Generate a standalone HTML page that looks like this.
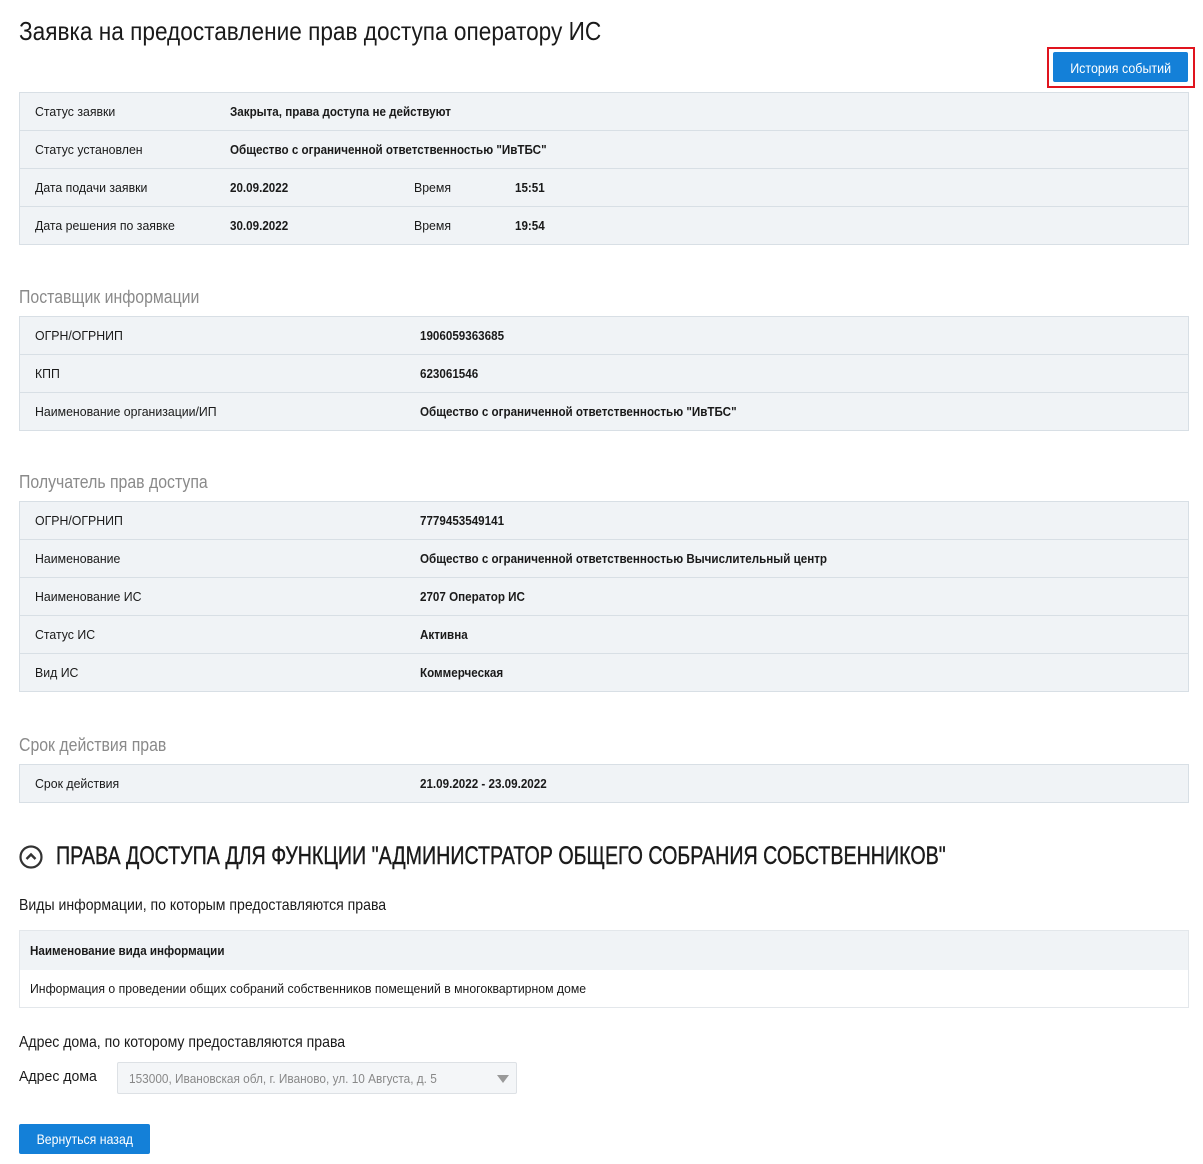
<!DOCTYPE html>
<html><head><meta charset="utf-8"><style>
body{margin:0;width:1203px;height:1164px;background:#fff;font-family:"Liberation Sans",Arial,sans-serif;color:#1a1a1a;position:relative;overflow:hidden}
.a{position:absolute;white-space:nowrap;transform:scaleX(.86);transform-origin:0 50%}
.t{position:absolute;left:19px;width:1168px;background:#f0f3f6;border:1px solid #d8dfe5}
.r{height:37px;border-top:1px solid #d8dfe5;position:relative;font-size:12.5px;line-height:39px}
.r:first-child{border-top:none}
.r span{position:absolute;white-space:nowrap;transform:scaleX(.985);transform-origin:0 50%}
.r span.b{font-weight:bold;transform:scaleX(.93)}
.h2{position:absolute;left:19px;font-size:18px;color:#8a8a8a;white-space:nowrap;transform:scaleX(.88);transform-origin:0 50%}
.h3{position:absolute;left:19px;font-size:16px;color:#1a1a1a;white-space:nowrap;transform:scaleX(.88);transform-origin:0 50%}
</style></head><body>
<div class="a" style="left:19px;top:15px;font-size:26px;line-height:32px;transform:scaleX(.87)">Заявка на предоставление прав доступа оператору ИС</div>
<div style="position:absolute;left:1047px;top:47px;width:144px;height:37px;border:2px solid #e0141e"></div>
<div style="position:absolute;left:1053px;top:52px;width:135px;height:30px;background:#1480d8;border-radius:2px;color:#fff;font-size:14px;line-height:32px;text-align:center"><span style="display:inline-block;transform:scaleX(.89)">История событий</span></div>

<div class="t" style="top:92px">
<div class="r"><span style="left:15px">Статус заявки</span><span class="b" style="left:210px">Закрыта, права доступа не действуют</span></div>
<div class="r"><span style="left:15px">Статус установлен</span><span class="b" style="left:210px">Общество с ограниченной ответственностью "ИвТБС"</span></div>
<div class="r"><span style="left:15px">Дата подачи заявки</span><span class="b" style="left:210px">20.09.2022</span><span style="left:394px">Время</span><span class="b" style="left:495px">15:51</span></div>
<div class="r"><span style="left:15px">Дата решения по заявке</span><span class="b" style="left:210px">30.09.2022</span><span style="left:394px">Время</span><span class="b" style="left:495px">19:54</span></div>
</div>

<div class="h2" style="top:287px">Поставщик информации</div>
<div class="t" style="top:316px">
<div class="r"><span style="left:15px">ОГРН/ОГРНИП</span><span class="b" style="left:400px">1906059363685</span></div>
<div class="r"><span style="left:15px">КПП</span><span class="b" style="left:400px">623061546</span></div>
<div class="r"><span style="left:15px">Наименование организации/ИП</span><span class="b" style="left:400px">Общество с ограниченной ответственностью "ИвТБС"</span></div>
</div>

<div class="h2" style="top:472px">Получатель прав доступа</div>
<div class="t" style="top:501px">
<div class="r"><span style="left:15px">ОГРН/ОГРНИП</span><span class="b" style="left:400px">7779453549141</span></div>
<div class="r"><span style="left:15px">Наименование</span><span class="b" style="left:400px">Общество с ограниченной ответственностью Вычислительный центр</span></div>
<div class="r"><span style="left:15px">Наименование ИС</span><span class="b" style="left:400px">2707 Оператор ИС</span></div>
<div class="r"><span style="left:15px">Статус ИС</span><span class="b" style="left:400px">Активна</span></div>
<div class="r"><span style="left:15px">Вид ИС</span><span class="b" style="left:400px">Коммерческая</span></div>
</div>

<div class="h2" style="top:735px">Срок действия прав</div>
<div class="t" style="top:764px">
<div class="r"><span style="left:15px">Срок действия</span><span class="b" style="left:400px">21.09.2022 - 23.09.2022</span></div>
</div>

<svg style="position:absolute;left:19px;top:845px" width="24" height="24" viewBox="0 0 24 24"><circle cx="12" cy="12" r="10.5" fill="none" stroke="#333" stroke-width="2.2"/><path d="M7.5 14 L12 9.5 L16.5 14" fill="none" stroke="#333" stroke-width="2.4"/></svg>
<div class="a" style="left:56px;top:841px;font-size:25px;line-height:30px;transform:scaleX(.786);-webkit-text-stroke:0.4px #1a1a1a">ПРАВА ДОСТУПА ДЛЯ ФУНКЦИИ "АДМИНИСТРАТОР ОБЩЕГО СОБРАНИЯ СОБСТВЕННИКОВ"</div>

<div class="h3" style="top:897px">Виды информации, по которым предоставляются права</div>
<div style="position:absolute;left:19px;top:930px;width:1168px;height:76px;border:1px solid #e3e7eb">
<div style="height:39px;background:#f0f3f6;position:relative;font-size:12.5px;line-height:40px"><span style="position:absolute;left:10px;font-weight:bold;white-space:nowrap;transform:scaleX(.93);transform-origin:0 50%">Наименование вида информации</span></div>
<div style="height:37px;position:relative;font-size:12.5px;line-height:38px"><span style="position:absolute;left:10px;white-space:nowrap;transform:scaleX(.98);transform-origin:0 50%">Информация о проведении общих собраний собственников помещений в многоквартирном доме</span></div>
</div>

<div class="h3" style="top:1034px">Адрес дома, по которому предоставляются права</div>
<div class="a" style="left:19px;top:1068px;font-size:15px;transform:scaleX(.94)">Адрес дома</div>
<div style="position:absolute;left:117px;top:1062px;width:398px;height:30px;background:#f4f6f8;border:1px solid #dde1e5;border-radius:2px">
<span style="position:absolute;left:11px;top:0;line-height:31px;font-size:13px;color:#888;white-space:nowrap;transform:scaleX(.91);transform-origin:0 50%">153000, Ивановская обл, г. Иваново, ул. 10 Августа, д. 5</span>
<div style="position:absolute;left:379px;top:12px;width:0;height:0;border-left:6px solid transparent;border-right:6px solid transparent;border-top:8px solid #999"></div>
</div>

<div style="position:absolute;left:19px;top:1124px;width:131px;height:30px;background:#1480d8;border-radius:2px;color:#fff;font-size:14px;line-height:31px;text-align:center"><span style="display:inline-block;transform:scaleX(.88)">Вернуться назад</span></div>
</body></html>
